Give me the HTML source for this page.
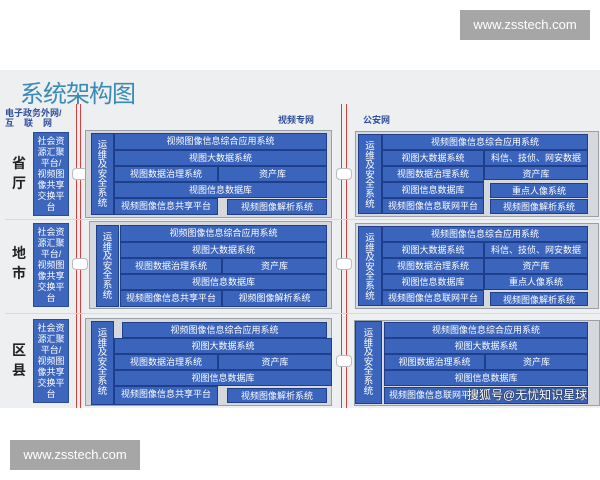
<!DOCTYPE html>
<html><head><meta charset="utf-8">
<style>
*{margin:0;padding:0;box-sizing:border-box}
body{width:600px;height:480px;background:#fff;position:relative;overflow:hidden;font-family:"Liberation Sans","Noto Sans CJK SC",sans-serif}
.a{position:absolute}
.wm{background:#a6a6a6;color:#fff;font-size:13px;text-align:center;line-height:30px}
.img{left:0;top:70px;width:600px;height:338px;background:#eeeff1}
.pan{background:#d6d8db;border:1px solid #9aa0a8}
.b{position:absolute;background:#3b64bc;color:#fff;font-size:9px;text-align:center;line-height:15px;border:1px solid #1f3f8a;white-space:nowrap;overflow:hidden}
.ops{position:absolute;background:#3b64bc;color:#fff;font-size:9.5px;line-height:9.6px;text-align:center;border:1px solid #1f3f8a;padding-top:7px;overflow:hidden}
.soc{position:absolute;background:#3d66bd;color:#fff;font-size:9px;line-height:11px;text-align:center;border:1px solid #2a4c98;padding-top:3px;overflow:hidden;white-space:nowrap}
.lvl{position:absolute;font-size:14px;line-height:20px;color:#222;font-weight:bold;width:16px}
.red{position:absolute;width:1px;background:#d84040;top:104px;height:304px}
.hl{position:absolute;left:5px;width:595px;height:1px;background:#f0d8a0}
.arr{position:absolute;width:16px;height:12px;background:#fff;border:1px solid #bbb;border-radius:4px}
</style></head><body>
<div class="a wm" style="left:460px;top:10px;width:130px;height:30px">www.zsstech.com</div>
<div class="a wm" style="left:10px;top:440px;width:130px;height:30px">www.zsstech.com</div>
<div class="a img"></div>
<div class="a" style="left:20px;top:74px;font-size:24px;color:#3a8ab5;letter-spacing:-1px">系统架构图</div>
<div class="a" style="left:5px;top:108px;font-size:9px;line-height:10px;color:#2f4f9a;font-weight:bold">电子政务外网/<br>互&nbsp;&nbsp;&nbsp;&nbsp;联&nbsp;&nbsp;&nbsp;&nbsp;网</div>
<div class="a" style="left:278px;top:113px;font-size:9px;color:#2f4f9a;font-weight:bold">视频专网</div>
<div class="a" style="left:363px;top:113px;font-size:9px;color:#2f4f9a;font-weight:bold">公安网</div>
<div class="red" style="left:76px"></div><div class="red" style="left:80px"></div>
<div class="red" style="left:341px"></div><div class="red" style="left:346px"></div>
<div class="hl" style="top:219px"></div><div class="hl" style="top:313px"></div>

<div class="lvl" style="left:12px;top:153px">省<br>厅</div>
<div class="lvl" style="left:12px;top:243px">地<br>市</div>
<div class="lvl" style="left:12px;top:340px">区<br>县</div>
<div class="soc" style="left:33px;top:132px;width:36px;height:84px">社会资<br>源汇聚<br>平台/<br>视频图<br>像共享<br>交换平<br>台</div>
<div class="soc" style="left:33px;top:223px;width:36px;height:84px">社会资<br>源汇聚<br>平台/<br>视频图<br>像共享<br>交换平<br>台</div>
<div class="soc" style="left:33px;top:319px;width:36px;height:84px">社会资<br>源汇聚<br>平台/<br>视频图<br>像共享<br>交换平<br>台</div>
<div class="arr" style="left:72px;top:168px"></div>
<div class="arr" style="left:72px;top:258px"></div>
<div class="arr" style="left:336px;top:168px"></div>
<div class="arr" style="left:336px;top:258px"></div>
<div class="arr" style="left:336px;top:355px"></div>

<div class="a pan" style="left:85px;top:130px;width:247px;height:88px"></div>
<div class="ops" style="left:91px;top:133px;width:23px;height:82px">运<br>维<br>及<br>安<br>全<br>系<br>统</div>
<div class="b" style="left:114px;top:133px;width:213px;height:17px">视频图像信息综合应用系统</div>
<div class="b" style="left:114px;top:150px;width:213px;height:16px">视图大数据系统</div>
<div class="b" style="left:114px;top:166px;width:104px;height:16px">视图数据治理系统</div>
<div class="b" style="left:218px;top:166px;width:109px;height:16px">资产库</div>
<div class="b" style="left:114px;top:182px;width:213px;height:16px">视图信息数据库</div>
<div class="b" style="left:114px;top:198px;width:104px;height:17px">视频图像信息共享平台</div>
<div class="b" style="left:227px;top:199px;width:100px;height:16px">视频图像解析系统</div>

<div class="a pan" style="left:89px;top:221px;width:243px;height:88px"></div>
<div class="ops" style="left:96px;top:225px;width:23px;height:82px">运<br>维<br>及<br>安<br>全<br>系<br>统</div>
<div class="b" style="left:120px;top:225px;width:207px;height:17px">视频图像信息综合应用系统</div>
<div class="b" style="left:120px;top:242px;width:207px;height:16px">视图大数据系统</div>
<div class="b" style="left:120px;top:258px;width:102px;height:16px">视图数据治理系统</div>
<div class="b" style="left:222px;top:258px;width:105px;height:16px">资产库</div>
<div class="b" style="left:120px;top:274px;width:207px;height:16px">视图信息数据库</div>
<div class="b" style="left:120px;top:290px;width:102px;height:17px">视频图像信息共享平台</div>
<div class="b" style="left:222px;top:290px;width:105px;height:17px">视频图像解析系统</div>

<div class="a pan" style="left:85px;top:318px;width:247px;height:88px"></div>
<div class="ops" style="left:91px;top:321px;width:23px;height:84px">运<br>维<br>及<br>安<br>全<br>系<br>统</div>
<div class="b" style="left:122px;top:322px;width:205px;height:16px">视频图像信息综合应用系统</div>
<div class="b" style="left:114px;top:338px;width:218px;height:16px">视图大数据系统</div>
<div class="b" style="left:114px;top:354px;width:104px;height:16px">视图数据治理系统</div>
<div class="b" style="left:218px;top:354px;width:114px;height:16px">资产库</div>
<div class="b" style="left:114px;top:370px;width:218px;height:16px">视图信息数据库</div>
<div class="b" style="left:114px;top:386px;width:104px;height:19px">视频图像信息共享平台</div>
<div class="b" style="left:227px;top:388px;width:100px;height:15px">视频图像解析系统</div>

<div class="a pan" style="left:355px;top:131px;width:244px;height:86px"></div>
<div class="ops" style="left:358px;top:134px;width:24px;height:80px">运<br>维<br>及<br>安<br>全<br>系<br>统</div>
<div class="b" style="left:382px;top:134px;width:206px;height:16px">视频图像信息综合应用系统</div>
<div class="b" style="left:382px;top:150px;width:102px;height:16px">视图大数据系统</div>
<div class="b" style="left:484px;top:150px;width:104px;height:16px">科信、技侦、网安数据</div>
<div class="b" style="left:382px;top:166px;width:102px;height:16px">视图数据治理系统</div>
<div class="b" style="left:484px;top:166px;width:104px;height:14px">资产库</div>
<div class="b" style="left:382px;top:182px;width:102px;height:16px">视图信息数据库</div>
<div class="b" style="left:490px;top:183px;width:98px;height:15px">重点人像系统</div>
<div class="b" style="left:382px;top:198px;width:102px;height:16px">视频图像信息联网平台</div>
<div class="b" style="left:490px;top:199px;width:98px;height:15px">视频图像解析系统</div>

<div class="a pan" style="left:355px;top:223px;width:244px;height:86px"></div>
<div class="ops" style="left:358px;top:226px;width:24px;height:80px">运<br>维<br>及<br>安<br>全<br>系<br>统</div>
<div class="b" style="left:382px;top:226px;width:206px;height:16px">视频图像信息综合应用系统</div>
<div class="b" style="left:382px;top:242px;width:102px;height:16px">视图大数据系统</div>
<div class="b" style="left:484px;top:242px;width:104px;height:16px">科信、技侦、网安数据</div>
<div class="b" style="left:382px;top:258px;width:102px;height:16px">视图数据治理系统</div>
<div class="b" style="left:484px;top:258px;width:104px;height:16px">资产库</div>
<div class="b" style="left:382px;top:274px;width:102px;height:16px">视图信息数据库</div>
<div class="b" style="left:484px;top:274px;width:104px;height:16px">重点人像系统</div>
<div class="b" style="left:382px;top:290px;width:102px;height:16px">视频图像信息联网平台</div>
<div class="b" style="left:490px;top:292px;width:98px;height:14px">视频图像解析系统</div>

<div class="a pan" style="left:354px;top:320px;width:246px;height:86px"></div>
<div class="ops" style="left:355px;top:321px;width:27px;height:83px">运<br>维<br>及<br>安<br>全<br>系<br>统</div>
<div class="b" style="left:384px;top:322px;width:204px;height:16px">视频图像信息综合应用系统</div>
<div class="b" style="left:384px;top:338px;width:204px;height:16px">视图大数据系统</div>
<div class="b" style="left:384px;top:354px;width:101px;height:16px">视图数据治理系统</div>
<div class="b" style="left:485px;top:354px;width:103px;height:16px">资产库</div>
<div class="b" style="left:384px;top:370px;width:204px;height:16px">视图信息数据库</div>
<div class="b" style="left:384px;top:387px;width:204px;height:17px;text-align:left;padding-left:4px">视频图像信息联网平台</div>
<div class="a" style="left:467px;top:386px;font-size:12px;color:#fff;text-shadow:0 0 2px #333,0 0 1px #000">搜狐号@无忧知识星球</div>
</body></html>
